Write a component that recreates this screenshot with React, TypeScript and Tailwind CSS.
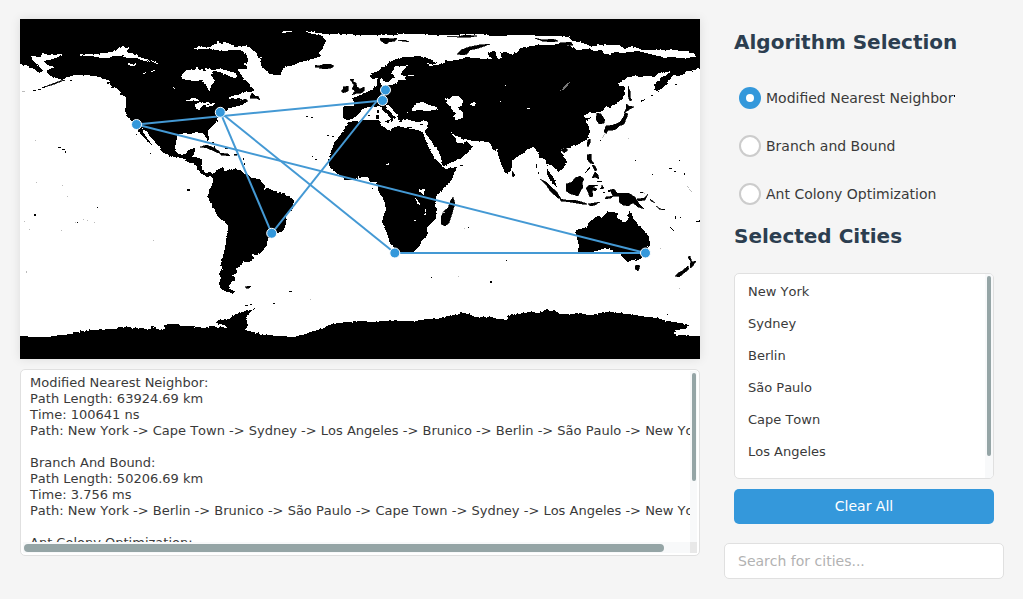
import React from "react";

const LAND = [
  // Americas, Arctic islands and Greenland
  "M20 19H700V70L698 68L695 70L688 71L684 74L678 76L673 75L667 82L668 84L664 86L661 89L657 92L655 90L654 84L656 82L660 80L662 77L667 75L670 71L666 73L662 72L657 74L654 77L648 76L640 77L635 76L628 77L624 80L617 85L621 86L625 87L625 94L623 98L620 101L616 104L610 107L606 106L603 111L598 112L593 113L590 112L587 114L583 116L586 118L592 117L589 119L586 121L588 124L589 128L590 131L589 135L587 139L583 142L578 145L574 145L570 147L567 148L563 148L561 152L564 156L567 162L565 166L561 170L558 172L557 169L555 169L553 166L548 164L547 168L550 173L553 177L555 181L557 187L554 185L552 182L549 178L547 174L547 168L546 161L543 158L540 158L538 153L535 148L533 147L530 148L526 150L522 154L517 157L512 161L512 166L511 171L507 174L504 170L502 166L500 160L498 154L497 149L495 151L493 149L491 145L488 142L480 141L470 141L466 139L463 139L460 137L455 136L451 131L452 134L455 138L458 143L463 143L466 140L468 143L472 147L470 151L462 157L455 161L443 166L441 162L441 157L437 149L433 144L429 138L424 131L427 129L428 121L424 121L418 122L413 121L409 120L405 117L406 113L412 113L412 109L417 103L422 102L425 101L430 105L437 107L438 110L430 111L420 111L412 113L404 112L405 117L402 121L399 122L397 115L393 110L388 105L385 104L387 109L392 114L396 118L393 119L392 123L389 117L384 112L380 106L373 107L368 107L362 109L360 113L355 117L352 119L347 120L343 118L343 106L350 106L354 106L354 102L352 98L358 96L363 94L367 92L374 88L377 85L377 79L381 77L380 82L382 86L388 85L397 84L398 80L402 80L406 80L403 77L417 75L412 75L404 76L400 75L402 71L405 69L408 65L404 66L398 69L394 71L393 74L395 77L391 79L389 82L385 82L382 78L377 78L372 79L370 76L372 73L378 71L382 67L388 64L392 61L399 58L405 57L411 57L417 56L425 57L432 60L438 63L433 64L426 63L429 66L435 65L442 64L445 61L450 61L455 60L462 59L466 57L474 58L485 59L492 59L488 55L489 52L495 51L498 59L502 58L500 53L506 52L512 54L518 52L520 48L526 47L538 45L550 45L562 44L573 47L577 50L588 49L594 51L602 50L604 54L609 54L615 52L622 53L630 52L638 51L650 54L658 56L664 58L670 57L682 58L696 57L695 54L688 51L668 50L642 50L632 46L625 49L619 45L601 45L592 46L585 44L580 42L572 41L568 37L556 36L545 36L525 35L490 36L480 34L440 35L410 34L385 35L360 35L345 34L332 34L323 36L326 41L324 45L323 49L318 53L321 56L315 58L312 59L305 61L300 62L294 65L285 67L282 71L280 76L275 75L270 74L266 71L262 67L260 62L262 57L258 58L257 54L254 51L249 47L244 46L235 46L230 44L225 42L222 44L218 42L215 44L210 47L204 47L190 48L197 49L208 49L222 51L231 50L240 50L247 54L248 62L242 64L247 66L247 69L242 69L238 69L239 72L242 76L246 81L250 85L255 91L248 92L242 93L238 95L233 96L228 99L235 98L240 96L243 97L241 101L247 102L242 105L235 107L229 108L226 111L220 113L218 118L217 121L212 126L208 131L209 139L207 141L205 136L202 133L196 132L190 134L184 133L178 135L177 138L175 147L177 153L182 155L186 154L188 150L194 148L196 149L194 154L192 157L197 158L202 159L202 169L205 173L210 172L213 174L215 171L223 167L226 170L232 169L240 170L244 174L247 174L252 178L260 179L265 186L264 190L268 188L274 191L279 192L285 194L294 200L293 208L289 212L286 217L286 224L284 229L281 232L273 234L268 238L267 245L264 249L260 254L256 255L252 254L253 258L250 262L244 262L241 264L240 267L236 268L237 271L233 276L235 278L232 281L229 285L230 289L236 292L232 293L225 291L221 289L219 283L221 278L219 274L222 268L221 264L224 253L226 242L227 235L228 227L225 222L218 217L215 210L210 202L208 198L209 191L212 185L213 179L211 176L207 177L200 172L194 164L187 162L186 159L180 158L172 157L166 154L162 152L161 149L155 142L149 135L144 130L142 128L145 135L152 145L149 143L143 137L138 130L132 122L127 116L125 111L126 105L126 98L122 93L116 88L111 86L108 80L103 78L95 76L85 75L75 75L68 77L62 80L53 77L48 74L47 70L55 67L47 65L44 61L53 59L58 57L63 54L50 55L42 53L41 57L31 56L33 61L37 65L41 69L43 71L38 73L34 69L28 66L24 65L20 64Z",
  // Africa
  "M343 131L348 122L355 121L365 120L380 120L380 124L388 130L398 126L406 128L418 130L423 132L425 139L430 150L434 157L440 164L445 169L457 167L452 179L448 185L442 190L436 197L435 203L437 210L436 218L427 227L427 235L422 240L420 246L413 252L405 254L397 253L394 248L390 243L387 233L382 222L384 214L386 210L385 203L382 197L378 190L377 182L370 182L368 177L360 177L352 180L345 180L338 174L330 168L328 161L330 154L334 144Z",
  // Antarctica
  "M20 359V336L35 337L48 337L60 335L72 334L76 332L93 330L105 329L118 329L118 327L125 327L137 328L151 329L152 327L160 330L165 329L164 325L170 324L178 324L180 326L190 326L205 328L210 326L220 327L227 328L224 325L215 323L218 320L230 319L231 317L236 314L245 311L257 308L251 311L247 315L246 320L248 325L245 330L253 332L265 335L280 336L293 337L303 335L308 333L316 330L322 329L329 325L338 323L348 322L358 321L375 322L393 320L400 321L415 321L425 319L438 319L443 317L455 315L462 313L469 314L475 317L485 317L495 317L500 319L507 320L508 316L516 314L530 312L540 313L547 309L551 311L554 310L560 314L570 314L580 313L588 315L592 315L605 312L620 313L635 315L647 317L658 318L666 321L675 322L689 325L685 329L675 330L676 332L673 334L678 335L700 336V359Z",
  // Australia
  "M575 231L580 229L587 227L589 222L592 220L595 217L599 216L601 218L604 215L607 212L612 212L618 213L617 217L621 220L625 222L628 219L629 210L632 214L634 220L637 223L640 227L645 232L649 237L650 244L647 251L642 258L637 261L632 260L628 262L622 257L619 251L616 254L612 250L605 248L597 251L590 252L580 254L578 251L579 245L577 238Z",
];

const ISLANDS = [
  "M350 79l4 0-1 3 3 1 1 4 3 2 4-2 0 4-3 2-4 0-5 2 3-4-3-2 2-4-2-3zM343 87l5-1 0 5-5 2-2-2 2-2z",
  "M315 65l4 1 5-2 6 0 4 2-3 2-7 1-5-1 1-1-5 0z",
  "M380 38l6 0 5 1 6-1-2 3-6 1-3 2-5-3zM398 40l7 0 4 2-7-1zM447 36l10 1 8-2 12 1-6 1-14 0z",
  "M457 54l4-4 8-3 10-2 11-1-11 4-9 2-3 4-4 1zM535 38l8 2 10-1 5 2-7 1-9-1zM560 43l11-1 2 3-9 0z",
  "M252 93l3 3 3 0 2 4-4-2-6 0 1-3zM238 102l7-3 3 2-6 2-4 3z",
  "M444 211l4-3 3-8 2-3 2 6-3 11-3 9-4 3-4-2 0-7z",
  "M512 171l3 4-2 2-1-3z",
  "M624 113l2-4 0-5 3 2 5 1-4 2-3 2zM606 126l7-1 5-2 3-2 3-5 1-3 3 1-2 5-2 5-5 2-3 3-3 1-5 0-2 4-2-2zM628 86l2 5 0 6 2 3-2 1-2-5z",
  "M597 113l4 1 4 6-1 3-5 1-3-5z",
  "M588 140l2-1 0 4-2 4-1-3zM587 155l4-1 0 5 3 5-4-1-3-4zM592 165l3 1 2 4-2 1zM595 172l3 3 1 4-4-2-3 1z",
  "M561 150l4-2 3 2-4 3z",
  "M540 179l6 3 6 6 5 4 4 7-3-1-7-6-4-6z M560 199l6 1 8 0 8 2 5 2-5 0-12-2-9-1zM588 204l6-1 6-1-5 3-5 1z",
  "M566 184l6-2 3-4 5-2 4 3-2 4 1 4-3 5-2 4-7-2-5-3z",
  "M586 188l3-3 9 0-6 2 5 2-2 2-3-1 1 6-3 1-2-5zM602 185l2 3-3 1zM606 197l7-1-2 2-6 1z",
  "M610 190l4-1 3 4 4 0 7 0 7 4 4 7 5 5-6-2-5-4-5 3-5-1-4-3 0-6-6 0z M637 199l7-1 4-4-3 6-7 1zM650 199l5 4-4-2zM656 206l6 4-3-1z",
  "M635 266l2-1 3 1-2 5-3-2z",
  "M690 256l2 6 4-1-3 5-3 2 0-4 1-2-3-5zM688 266l1 3-5 4-5 4-4-1 3-3 4-2z",
  "M200 147l6-2 6 2 7 4 2 3-7-3-7-3zM220 153l8 1 2 2-9-1zM234 154l4 0-1 1-3 0z",
  "M245 287l3-1 3 0-2 2-3 0z",
  "M60 81L52 84L44 87L52 85L65 80Z",
];

const SPECKS =
  "M58 147h3v1h-3zM62 149h3v1h-3zM65 151h1v2h-1zM34 214h2v2h-2zM97 207h1v1h-1zM77 222h1v1h-1zM187 189h3v2h-3zM306 116h2v1h-2zM311 117h2v1h-2zM327 135h2v1h-2zM332 136h2v1h-2zM312 156h1v1h-1zM315 159h2v1h-2zM490 281h2v2h-2zM468 227h1v1h-1zM431 277h1v1h-1zM506 260h1v1h-1zM372 188h1v1h-1zM273 303h2v1h-2zM667 314h1v1h-1zM670 227l4 3-1 1-4-4zM695 222l5-2 0 2-5 0zM680 217h1v1h-1zM679 160h1v1h-1zM669 168h3v1h-3zM674 171h2v1h-2zM684 173h1v2h-1zM652 174h1v1h-1zM635 160h1v1h-1zM675 84h2v1h-2zM651 95h2v1h-2zM640 101l5-2 0 1-4 2zM600 140h1v1h-1zM107 82h2v2h-2zM113 83h1v2h-1zM111 87h3v1h-3zM120 93h3v2h-3zM126 95h2v4h-2zM136 134h1v1h-1zM150 153h1v1h-1zM70 80h2v1h-2zM151 326h3v1h-3zM289 291h3v1h-3zM42 87h3v1h-3zM38 89h3v1h-3zM33 90h3v1h-3zM212 142h2v1h-2zM214 146h1v2h-1zM225 148h3v1h-3zM243 158h1v2h-1zM244 163h1v2h-1zM536 164h1v4h-1zM538 172h1v2h-1zM590 168l-5 6 0-1 4-6zM597 181h5v1h-5zM603 192h2v1h-2zM608 190h2v2h-2zM600 188h3v1h-3zM640 192h3v1h-3zM662 209h3v1h-3zM675 216h1v3h-1zM460 165h3v1h-3zM245 305h3v1h-3zM250 304h2v1h-2z";

const WATER = [
  // Beaufort Sea and northern passages
  "M78 54L95 54L105 53L115 51L119 47L124 46L125 48L130 47L126 51L129 53L137 54L139 57L148 60L156 61L157 64L151 61L144 61L137 58L128 58L121 56L113 56L108 58L101 58L92 56L84 56Z",
  "M127 63l5 1 5-1-2 3-6 0zM142 73l4-1-2 3zM149 71l6-1-3 2zM173 87l3 2 1 3-3-3zM187 100l6-1 1 1z",
  // Hudson Bay and Hudson Strait
  "M182 75L186 70L193 70L196 67L200 70L206 71L205 68L212 70L220 69L228 71L236 73L237 77L233 78L227 75L220 72L213 71L211 75L215 81L211 85L210 91L207 89L206 83L202 82L203 80L195 81L187 80L182 79Z",
  "M186 101L192 98L196 97L199 101L193 101ZM195 104L200 102L205 103L209 101L210 104L203 105L199 110L196 110ZM205 107L212 106L216 103L210 104Z",
  "M228 98L235 95L244 94L250 93L246 96L252 98L245 100L237 98Z",
  "M278 32l9-1 7 0-5 1-6 1zM305 31l20 3 8 1-9 2-4-2-8-1z",
  // Inland seas and lakes
  "M412 109L417 103L422 102L424 103L429 105L437 107L438 110L427 111L419 110L412 111Z",
  "M445 98L450 99L452 96L458 96L463 101L462 106L457 107L463 112L463 118L456 120L452 117L455 114L451 108L447 104ZM471 103l3-1 2 2-3 2-3-1z",
  "M419 189l6 0-1 5-5-1zM415 198l2 1 3 6-2-1zM425 209l1 0 0 6-1 0zM414 220h2v1h-2zM395 66l-4 8 4 0-2 5 8-2 1-2-2-1 3-5 4-3z",
  "M391 131L382 126L382 121L390 124ZM224 167h2v4h-2zM527 108h3v1h-3zM505 85h1v1h-1zM386 164h3v1h-3zM501 100h1v1h-1zM496 52l2 7 3-5zM509 53l4 0 0 2-4-1z",
  "M376 108l5 4 1 8-6 0-8-4 0-4z",
];

const MED_ISLANDS =
  "M377 110h2v3h-2zM376 115h3v4h-3zM384 121l6-1-1 3-4-1zM407 127h5v1h-5zM420 124h3v1h-3zM368 115h2v1h-2zM401 113l5-1 4 2 0 5-3-1-2 3-3-5z";

const FAINT =
  "M24 221h1v1h-1zM29 229h1v1h-1zM26 271h1v2h-1zM62 185h1v1h-1zM67 196h1v1h-1zM75 222h1v1h-1zM83 219h1v1h-1zM87 220h1v1h-1zM94 222h1v1h-1zM61 230h1v1h-1zM153 240h1v1h-1zM310 299h1v1h-1zM22 91h3v1h-3zM464 228h1v1h-1zM442 212h3v1h-3zM458 276h1v1h-1zM660 248h1v1h-1zM679 288h1v1h-1zM687 185l5 7-1 0-4-6zM643 191l2 3-1 0zM606 133l-4 6 0-1 3-5zM628 138h1v1h-1zM36 182h1v1h-1zM35 140h1v1h-1z";

const LAKE_BAIKAL = "M557 91l5-1 3-5 5-3-3 5-4 3-4 1z";

const ROUTES: [number, number, number, number][] = [
  [136.5, 124.5, 382.5, 100.5],
  [382.5, 100.5, 385.5, 90],
  [385.5, 90, 271.7, 233.3],
  [271.7, 233.3, 220.3, 112.3],
  [220.3, 112.3, 394.8, 253],
  [394.8, 253, 645.5, 253],
  [645.5, 253, 136.5, 124.5],
];

const MARKERS: [number, number][] = [
  [220.3, 112.3],
  [645.5, 253],
  [385.5, 90],
  [271.7, 233.3],
  [394.8, 253],
  [136.5, 124.5],
  [382.5, 100.5],
];

const RESULTS = [
  "Modified Nearest Neighbor:",
  "Path Length: 63924.69 km",
  "Time: 100641 ns",
  "Path: New York -> Cape Town -> Sydney -> Los Angeles -> Brunico -> Berlin -> São Paulo -> New York",
  "",
  "Branch And Bound:",
  "Path Length: 50206.69 km",
  "Time: 3.756 ms",
  "Path: New York -> Berlin -> Brunico -> São Paulo -> Cape Town -> Sydney -> Los Angeles -> New York",
  "",
  "Ant Colony Optimization:",
];

const CITIES = ["New York", "Sydney", "Berlin", "São Paulo", "Cape Town", "Los Angeles"];

function WorldMap() {
  return (
    <svg
      viewBox="20 19 680 340"
      className="block h-[340px] w-[680px] shrink-0 bg-white shadow-[0_0_10px_rgba(0,0,0,0.1)]"
    >
      <defs>
        {/* Roughens the coastlines by about a pixel */}
        <filter id="coast" filterUnits="userSpaceOnUse" x="20" y="19" width="680" height="340" colorInterpolationFilters="sRGB">
          <feTurbulence type="fractalNoise" baseFrequency="0.35" numOctaves="2" seed="4" result="noise" />
          <feDisplacementMap in="SourceGraphic" in2="noise" scale="2.6" xChannelSelector="R" yChannelSelector="G" />
        </filter>
      </defs>
      <g shapeRendering="crispEdges">
        <g filter="url(#coast)">
          <path d={LAND.join("")} />
          <path d={WATER.join("")} fill="#fff" />
        </g>
        <path d="M20 19H700V26H20ZM20 352H700V359H20ZM20 19H23V62H20ZM697 19H700V68H697ZM20 338H23V359H20ZM697 338H700V359H697Z" />
        <path d={ISLANDS.join("")} stroke="#000" strokeWidth={0.6} />
        <path d={SPECKS} />
        <path d={MED_ISLANDS} />
        <path d={FAINT} fill="#bbb" />
        <path d={LAKE_BAIKAL} fill="#777" />
      </g>
      {ROUTES.map(([x1, y1, x2, y2], i) => (
        <line key={i} x1={x1} y1={y1} x2={x2} y2={y2} stroke="#4499d4" strokeWidth={2} />
      ))}
      {MARKERS.map(([x, y], i) => (
        <circle key={i} cx={x} cy={y} r={5} fill="#3498db" stroke="#fff" strokeWidth={1} />
      ))}
    </svg>
  );
}

function ResultsPanel() {
  return (
    <div className="mt-[10px] flex h-[187px] w-[680px] flex-col rounded-[5px] border border-[#e0e0e0] bg-white px-[2px] pt-px pb-[2px]">
      <div className="flex min-h-0 flex-1">
        <div className="w-[667px] overflow-hidden pt-1 pl-[7px] text-[13px] leading-4 whitespace-pre text-[#3a3a3a]">
          {RESULTS.map((line, i) => (
            <div key={i} className="h-4">
              {line}
            </div>
          ))}
        </div>
        <div className="w-[7px] bg-[#f8f9fa] px-[2px] pt-[2px]">
          <div className="h-[108px] w-1 rounded-full bg-[#95a5a6]" />
        </div>
      </div>
      <div className="flex h-[11px]">
        <div className="w-[667px] bg-[#f8f9fa] pt-[2px] pl-[1px]">
          <div className="h-2 w-[640px] rounded-full bg-[#95a5a6]" />
        </div>
        <div className="w-[7px] bg-[#e8e8e8]" />
      </div>
    </div>
  );
}

function RadioRow({ label, checked, tick }: { label: string; checked?: boolean; tick?: boolean }) {
  return (
    <label className="flex h-12 items-center">
      {checked ? (
        <span className="flex size-[22px] items-center justify-center rounded-full bg-[#3498db]">
          <span className="size-2 rounded-full bg-white" />
        </span>
      ) : (
        <span className="size-[22px] rounded-full border-2 border-[#ccc] bg-white" />
      )}
      <span className="ml-[5px] text-[14px] leading-4 text-[#3a3a3a]">{label}</span>
      {tick && <span className="mb-[5px] ml-px h-0.5 w-px bg-black" />}
    </label>
  );
}

export default function App() {
  return (
    <div className="flex h-[599px] w-[1023px] overflow-hidden bg-[#f5f5f5] pt-[19px] pl-5 font-['DejaVu_Sans',sans-serif] [font-kerning:none]">
      <main className="flex w-[680px] flex-col">
        <WorldMap />
        <ResultsPanel />
      </main>
      <aside className="ml-6 flex w-[280px] flex-col">
        <section className="flex flex-col px-[10px]">
          <h2 className="mt-[11px] h-6 text-[20px] leading-6 font-bold whitespace-nowrap text-[#2c3e50]">
            Algorithm Selection
          </h2>
          <div className="mt-5 pl-[5px]">
            <RadioRow label="Modified Nearest Neighbor" checked tick />
            <RadioRow label="Branch and Bound" />
            <RadioRow label="Ant Colony Optimization" />
          </div>
          <h2 className="mt-[6px] h-6 text-[20px] leading-6 font-bold text-[#2c3e50]">Selected Cities</h2>
          <div className="mt-[25px] flex h-[206px] justify-between overflow-hidden rounded-[5px] border border-[#e0e0e0] bg-white">
            <ul className="pt-[2px] pl-[13px] text-[13px] leading-8 text-[#3a3a3a]">
              {CITIES.map((city) => (
                <li key={city}>{city}</li>
              ))}
            </ul>
            <div className="w-2 bg-[#f8f9fa] px-[2px] pt-[2px]">
              <div className="h-[180px] w-1 rounded-full bg-[#95a5a6]" />
            </div>
          </div>
          <button className="mt-[10px] h-[35px] rounded-[5px] bg-[#3498db] text-[14px] text-white [font-kerning:none]">
            Clear All
          </button>
        </section>
        <input
          placeholder="Search for cities..."
          className="mt-[19px] h-9 w-[280px] rounded-[5px] border border-[#e0e0e0] bg-white px-[13px] text-[14px] outline-none placeholder:text-[#b2b2b2]"
        />
      </aside>
    </div>
  );
}
